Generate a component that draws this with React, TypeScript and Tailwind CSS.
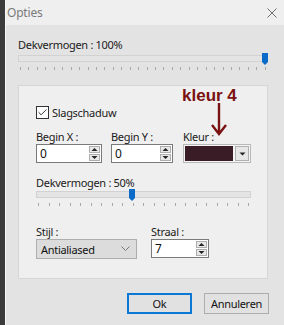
import { Check } from 'lucide-react'

const font = { fontFamily: '"Noto Sans", "Open Sans", sans-serif' }

function Ticks({ count }: { count: number }) {
  return (
    <div className="flex justify-between px-[2px]">
      {Array.from({ length: count }).map((_, i) => (
        <span key={i} className="h-[3px] w-px bg-[#a8a8a8]" />
      ))}
    </div>
  )
}

function Slider({ pos, ticks }: { pos: string; ticks: number }) {
  return (
    <div>
      <div className="relative h-[7px] border border-[#d2d2d2] bg-[#e4e4e4]">
        <span className={`absolute top-[-3px] h-[12px] w-[6px] ${pos}`}>
          <svg width="6" height="12" viewBox="0 0 6 12" className="block">
            <path d="M0 0H6V9L3 12L0 9Z" fill="#0a6cc8" />
          </svg>
        </span>
      </div>
      <div className="mt-[5px]">
        <Ticks count={ticks} />
      </div>
    </div>
  )
}

function Spin({ value, width }: { value: string; width: string }) {
  return (
    <div className={`flex h-[19px] ${width} items-center border border-[#7a7a7a] bg-white pl-[3px] pr-[1px]`}>
      <span className="flex-1 text-[12px] leading-none text-[#111]">{value}</span>
      <div className="flex flex-col gap-px">
        {['M1.5 5L4.5 2L7.5 5Z', 'M1.5 2L4.5 5L7.5 2Z'].map((d) => (
          <span key={d} className="flex h-[7px] w-[11px] items-center justify-center border border-[#adadad] bg-[#e8e8e8]">
            <svg width="9" height="7" viewBox="0 0 9 7">
              <path d={d} fill="#222" />
            </svg>
          </span>
        ))}
      </div>
    </div>
  )
}

export default function App() {
  return (
    <div className="flex h-[325px] w-[284px] bg-[#3b3b3b]" style={font}>
      <div className="ml-[5px] flex flex-1 flex-col border-l border-[#f7f7f7] bg-[#e3e3e3]">
        <div className="flex h-[25px] items-center justify-between bg-[#efefef] pl-[1px] pr-[7px]">
          <span className="text-[12px] tracking-[-0.2px] text-[#7a7a7a]">Opties</span>
          <svg width="10" height="10" viewBox="0 0 10 10">
            <path d="M0.5 0.5L9.5 9.5M9.5 0.5L0.5 9.5" stroke="#6f6f6f" strokeWidth="1" />
          </svg>
        </div>

        <div className="flex flex-1 flex-col pl-[12px] pr-[16px] pt-[12px] text-[11px] leading-[15px] tracking-[-0.3px] text-[#1a1a1a]">
          <p>Dekvermogen : 100%</p>
          <div className="mt-[3px]">
            <Slider pos="right-[-1px]" ticks={30} />
          </div>

          <div className="relative mt-[15px] border border-[#d6d6d6] bg-[#efefef] pb-[19px] pl-[17px] pr-[16px] pt-[19px]">
            <span
              className="absolute left-[163px] top-[1px] text-[17px] font-bold leading-[17px] tracking-normal text-[#7a1212]"
              style={{ fontFamily: '"Liberation Sans", Arial, sans-serif' }}
            >
              kleur 4
            </span>
            <svg className="absolute left-[190px] top-[17px]" width="20" height="33" viewBox="0 0 20 33">
              <path d="M10 0V30M3 22L10 31L17 22" stroke="#7a1212" strokeWidth="2.4" fill="none" />
            </svg>

            <label className="flex h-[14px] items-center gap-[3px]">
              <span className="flex h-[13px] w-[13px] items-center justify-center border border-[#333] bg-white">
                <Check className="h-[11px] w-[11px] text-[#222]" strokeWidth={2} />
              </span>
              <span>Slagschaduw</span>
            </label>

            <div className="mt-[10px] flex">
              <div className="w-[66px]">
                <p>Begin X :</p>
                <Spin value="0" width="w-[66px]" />
              </div>
              <div className="ml-[9px] w-[62px]">
                <p>Begin Y :</p>
                <Spin value="0" width="w-[62px]" />
              </div>
              <div className="ml-[10px] w-[68px]">
                <p>Kleur :</p>
                <div className="flex h-[19px] items-center gap-[2px] border border-[#b8b8b8] bg-[#f4f4f4] p-[1px]">
                  <span className="h-full flex-1 bg-[#3a1c26]" />
                  <span className="flex h-[15px] w-[14px] items-center justify-center border border-[#b0b0b0] bg-[#e6e6e6]">
                    <svg width="7" height="4" viewBox="0 0 7 4">
                      <path d="M0.5 0.5H6.5L3.5 3.5Z" fill="#222" />
                    </svg>
                  </span>
                </div>
              </div>
            </div>

            <p className="mt-[12px]">Dekvermogen : 50%</p>
            <div className="mt-[1px]">
              <Slider pos="left-[92px]" ticks={21} />
            </div>

            <div className="mt-[18px] flex">
              <div className="w-[101px]">
                <p>Stijl :</p>
                <div className="flex h-[20px] items-center justify-between border border-[#adadad] bg-[#dcdcdc] pl-[4px] pr-[6px]">
                  <span className="text-[#111]">Antialiased</span>
                  <svg width="9" height="6" viewBox="0 0 9 6">
                    <path d="M0.5 0.5L4.5 4.5L8.5 0.5" stroke="#777" fill="none" />
                  </svg>
                </div>
              </div>
              <div className="ml-[14px]">
                <p>Straal :</p>
                <Spin value="7" width="w-[58px]" />
              </div>
            </div>
          </div>

          <div className="mt-[14px] flex justify-end gap-[12px]">
            <button className="h-[21px] w-[65px] border-2 border-[#0a78d4] bg-[#e1e1e1] text-[11px] leading-none tracking-[-0.3px] text-[#111]">
              Ok
            </button>
            <button className="-mr-px h-[21px] w-[65px] border border-[#adadad] bg-[#e1e1e1] text-[11px] leading-none tracking-[-0.3px] text-[#111]">
              Annuleren
            </button>
          </div>
        </div>
      </div>
    </div>
  )
}
